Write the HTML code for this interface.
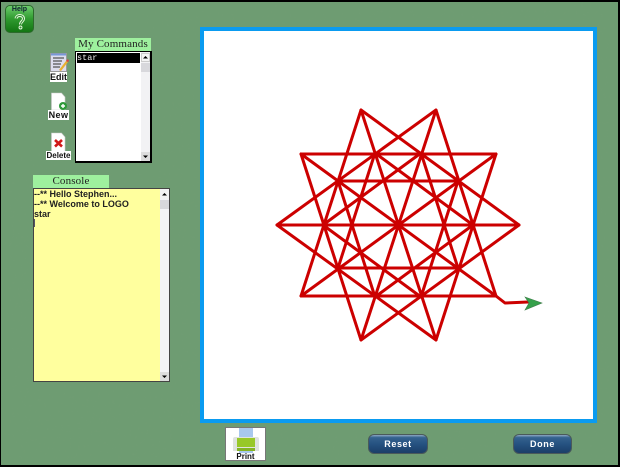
<!DOCTYPE html>
<html><head><meta charset="utf-8"><style>
html,body{margin:0;padding:0}
body{width:620px;height:467px;overflow:hidden;background:#000;position:relative;font-family:"Liberation Sans",sans-serif}
.a{position:absolute;box-sizing:border-box}
.lbl{background:#fff;color:#111;font-weight:bold;font-size:9px;line-height:10px;text-align:center;filter:blur(.25px)}
.tab{background:#9ef09e;font-family:"Liberation Serif",serif;font-size:11px;letter-spacing:.15px;text-align:center;color:#222;line-height:13px;white-space:nowrap}
.btn{border-radius:6px;background:linear-gradient(#8fa9c4 0,#34628f 14%,#24507f 55%,#1b3f68 100%);border:1px solid #4a5a5a;color:#fff;font-weight:bold;font-size:9px;text-align:center;line-height:19px;letter-spacing:.6px;filter:blur(.2px)}
.txt{font-weight:bold;font-size:9px;line-height:10px;color:#222;white-space:pre;left:34px;filter:blur(.2px)}
</style></head><body>
<div class="a" style="left:1px;top:2px;width:617px;height:463px;background:#6e9c72"></div>
<svg class="a" style="left:1px;top:2px" width="617" height="463" opacity=".07"><filter id="n"><feTurbulence type="fractalNoise" baseFrequency=".35" numOctaves="2"/><feColorMatrix values="0 0 0 0 .25 0 0 0 0 .4 0 0 0 0 .25 0 0 0 1.2 -.4"/></filter><rect width="617" height="463" filter="url(#n)"/></svg>

<div class="a" style="left:5px;top:5px;width:29px;height:28px;border-radius:5px;background:linear-gradient(#6ccc6c,#2f9a2f 50%,#137513);border:1px solid #2c6a2c"></div>
<div class="a" style="left:5px;top:6px;width:29px;text-align:center;font-size:7px;font-weight:bold;color:#123;line-height:8px">Help</div>
<svg class="a" style="left:5px;top:14px" width="29" height="17"><g fill="none"><path d="M11 4.500C11.300 2.800 12.800 1.500 14.800 1.500 17 1.500 18.500 2.800 18.500 4.800 18.500 7.300 15.500 7.500 15.500 10.500" stroke="#e8f5e0" stroke-width="3"/><path d="M11 4.500C11.300 2.800 12.800 1.500 14.800 1.500 17 1.500 18.500 2.800 18.500 4.800 18.500 7.300 15.500 7.500 15.500 10.500" stroke="#2f922f" stroke-width="1.100"/></g><circle cx="15.500" cy="13.500" r="1.500" fill="#2f922f" stroke="#e8f5e0" stroke-width=".9"/></svg>

<div class="a tab" style="left:75px;top:38px;width:76px;height:13px">My Commands</div>
<div class="a" style="left:75px;top:51px;width:77px;height:112px;background:#fff;border:1px solid #000;border-width:1px 2px 2px 1px"></div>
<div class="a" style="left:77px;top:53px;width:63px;height:10px;background:#000;color:#eee;font:8.500px/10px 'Liberation Mono',monospace">star</div>
<div class="a" style="left:141px;top:52px;width:9px;height:109px;background:#f2f2f4"></div>
<div class="a" style="left:141px;top:53px;width:9px;height:9px;background:#f4f4f4;border:1px solid #ccc"></div>
<div class="a" style="left:141px;top:63px;width:9px;height:9px;background:#d8d8dc"></div>
<div class="a" style="left:141px;top:152px;width:9px;height:9px;background:#ddd"></div>
<svg class="a" style="left:141px;top:53px" width="9" height="108"><path d="M2 5.500h5L4.500 3zM2 102.500h5L4.500 105z" fill="#000"/></svg>

<svg class="a" style="left:44px;top:50px" width="32" height="112">
<rect x="6.500" y="3.500" width="16" height="18" fill="#dde" stroke="#999"/><rect x="7" y="3.500" width="15" height="2" fill="#7898d8"/>
<path d="M9 8h11M9 11h9M9 14h8M9 17h7" stroke="#555" stroke-width="1.200"/><path d="M15 20l7-9 2 1-7 9z" fill="#e8b030"/><path d="M22 11l2-2 1 2-1 1z" fill="#e04040"/>
<path d="M7.500 43h10l3.500 4v13h-13.500z" fill="#fff" stroke="#ccc" stroke-width=".6"/><circle cx="19" cy="56" r="4" fill="#2f9a3a"/><path d="M17 56h4M19 54v4" stroke="#fff" stroke-width="1.400"/>
<path d="M7.500 83h10l3.500 4v15h-13.500z" fill="#fff" stroke="#ccc" stroke-width=".6"/><path d="M11 90l7 6.500M18 90l-7 6.500" stroke="#d01818" stroke-width="2.600"/>
</svg>
<div class="a lbl" style="left:50px;top:72px;width:17px;height:10px">Edit</div>
<div class="a lbl" style="left:48px;top:110px;width:21px;height:10px;letter-spacing:.4px">New</div>
<div class="a lbl" style="left:46px;top:151px;width:25px;height:9px;line-height:9px;font-size:8px">Delete</div>

<div class="a tab" style="left:33px;top:175px;width:76px;height:13px">Console</div>
<div class="a" style="left:33px;top:188px;width:137px;height:194px;background:#ffff9e;border:1px solid #444"></div>
<div class="a" style="left:160px;top:189px;width:9px;height:192px;background:#f3f3f6"></div>
<div class="a" style="left:160px;top:190px;width:9px;height:9px;background:#f4f4f4"></div>
<div class="a" style="left:160px;top:200px;width:9px;height:9px;background:#d8d8dc"></div>
<div class="a" style="left:160px;top:372px;width:9px;height:9px;background:#ddd"></div>
<svg class="a" style="left:160px;top:190px" width="9" height="191"><path d="M2 5.500h5L4.500 3zM2 185.500h5l-2.500 2.500z" fill="#000"/></svg>
<div class="a txt" style="top:189px">--** Hello Stephen...</div>
<div class="a txt" style="top:199px">--** Welcome to LOGO</div>
<div class="a txt" style="top:209px">star</div>
<div class="a" style="left:34px;top:219px;width:1px;height:8px;background:#556"></div>

<div class="a" style="left:200px;top:27px;width:397px;height:396px;background:#fff;border:4px solid #0a9bf0"></div>
<svg class="a" style="left:0;top:0" width="620" height="467">
<g fill="none" stroke="#cc0000" stroke-width="3" stroke-linejoin="round" stroke-linecap="round">
<path d="M519 225L361 110L301 296H496L436 110L277 225L436 340L496 154H301L361 340Z"/>
<path d="M361 110L436 340M436 110L361 340M301 154L496 296M496 154L301 296M277 225H519"/>
<path d="M473 225L375 153L338 268H458L421 153L323 225L421 297L458 181H338L375 297Z"/>
<path d="M496 296L505 303L528 302"/>
</g>
<path d="M525 297L542 303L525 310L529 303Z" fill="#35a04a" stroke="#3f7a4a" stroke-width=".6"/>
</svg>

<div class="a" style="left:225px;top:427px;width:41px;height:34px;background:#fff;border:1px solid #777"></div>
<svg class="a" style="left:225px;top:427px" width="41" height="34">
<rect x="14" y="1" width="14" height="10" fill="#a8c8ee"/><path d="M8 12q0-2 2-2h22q2 0 2 2v12H8z" fill="#dfe3df"/><rect x="12" y="11" width="18" height="9" fill="#98c828"/><rect x="12" y="21" width="18" height="3" fill="#84b424"/><rect x="14" y="24" width="14" height="2" fill="#a8c8ee"/>
</svg>
<div class="a" style="left:225px;top:452px;width:41px;text-align:center;font-size:8px;font-weight:bold;color:#111;line-height:9px">Print</div>

<div class="a btn" style="left:368px;top:434px;width:60px;height:20px">Reset</div>
<div class="a btn" style="left:513px;top:434px;width:59px;height:20px">Done</div>
</body></html>
